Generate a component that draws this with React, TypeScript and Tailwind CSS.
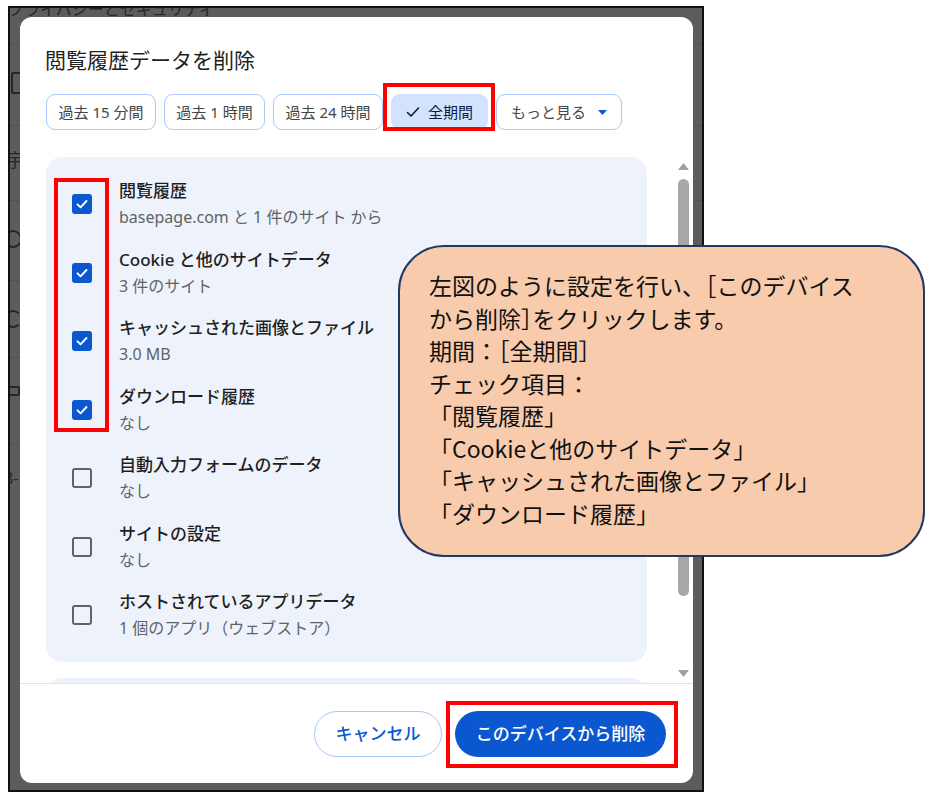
import React from "react";

const ui = "font-['Noto_Sans','Noto_Sans_CJK_JP',sans-serif]";

type Item = { title: string; sub: string; checked: boolean };

const items: Item[] = [
    { title: "閲覧履歴", sub: "basepage.com と 1 件のサイト から", checked: true },
    { title: "Cookie と他のサイトデータ", sub: "3 件のサイト", checked: true },
    { title: "キャッシュされた画像とファイル", sub: "3.0 MB", checked: true },
    { title: "ダウンロード履歴", sub: "なし", checked: true },
    { title: "自動入力フォームのデータ", sub: "なし", checked: false },
    { title: "サイトの設定", sub: "なし", checked: false },
    { title: "ホストされているアプリデータ", sub: "1 個のアプリ（ウェブストア）", checked: false }
];

function Checkbox({ checked }: { checked: boolean }) {
    if (checked) {
        return (
            <div className="w-[20px] h-[20px] rounded-[3px] bg-[#0b57d0] flex items-center justify-center">
                <svg width="14" height="14" viewBox="0 0 14 14" fill="none">
                    <path d="M2.5 7.3l3 3L11.5 4" stroke="white" strokeWidth="1.9" strokeLinecap="round" strokeLinejoin="round" />
                </svg>
            </div>
        );
    }
    return <div className="w-[20px] h-[20px] rounded-[3px] border-2 border-[#5f6368]" />;
}

function Chip({ label, width }: { label: string; width: string }) {
    return (
        <div
            className={`${width} h-[36px] rounded-[9px] border border-[#a8c7fa] flex items-center justify-center text-[15px] text-[#444746]`}
        >
            {label}
        </div>
    );
}

// half-width bracket like the callout's font
function B({ c }: { c: string }) {
    return <span className="[font-feature-settings:'halt']">{c}</span>;
}

function Background() {
    return (
        <div className="absolute inset-0">
            <div className="absolute left-[-2px] top-[-7px] text-[16px] leading-[16px] text-[#262626] whitespace-nowrap">
                プライバシーとセキュリティ
            </div>
            <div className="absolute left-0 top-[35px] w-full h-px bg-[#515151]" />
            <div className="absolute left-0 top-[117px] w-full h-px bg-[#515151]" />
            <div className="absolute left-0 top-[192px] w-full h-px bg-[#515151]" />
            <div className="absolute left-0 top-[272px] w-full h-px bg-[#515151]" />
            <div className="absolute left-0 top-[349px] w-full h-px bg-[#515151]" />
            <div className="absolute left-0 top-[435px] w-full h-px bg-[#515151]" />
            <div className="absolute left-[1px] top-[64px] w-[14px] h-[22px] border-2 border-[#262626] rounded-[2px]" />
            <div className="absolute left-[-4px] top-[143px] text-[18px] leading-[18px] text-[#262626]">宇</div>
            <div className="absolute left-[-6px] top-[222px] w-[18px] h-[18px] rounded-full border-2 border-[#262626]" />
            <div className="absolute left-[-6px] top-[302px] w-[18px] h-[18px] rounded-full border-2 border-[#262626] border-r-transparent" />
            <div className="absolute left-[-4px] top-[378px] w-[14px] h-[10px] border-2 border-[#262626] rounded-[2px]" />
            <div className="absolute left-[-6px] top-[462px] text-[16px] leading-[16px] text-[#262626]">8-</div>
        </div>
    );
}

export default function App() {
    return (
        <div className={`relative w-[943px] h-[798px] bg-white overflow-hidden ${ui}`}>
            <div className="pl-[8px] pt-[6px]">
                <div className="relative w-[696px] h-[786px] border-2 border-[#111] bg-[#5c5c5c] overflow-hidden pl-[10px] pt-[9px]">
                    <Background />
                    <div className="relative w-[673px] h-[766px] rounded-[12px] bg-white flex flex-col overflow-hidden">
                        <div className="pt-[29px] pl-[25px] text-[21px] leading-[28px] text-[#1f1f1f]">
                            閲覧履歴データを削除
                        </div>
                        <div className="mt-[20px] pl-[26px] flex gap-2">
                            <Chip label="過去 15 分間" width="w-[110px]" />
                            <Chip label="過去 1 時間" width="w-[101px]" />
                            <Chip label="過去 24 時間" width="w-[110px]" />
                            <div className="w-[97px] h-[36px] rounded-[9px] bg-[#d3e3fd] flex items-center justify-center gap-[8px] text-[15px] text-[#041e49]">
                                <svg width="14" height="14" viewBox="0 0 14 14" fill="none">
                                    <path d="M1.5 7.5l3.5 3.5L12.5 3" stroke="#041e49" strokeWidth="1.6" strokeLinecap="round" strokeLinejoin="round" />
                                </svg>
                                <span>全期間</span>
                            </div>
                            <div className="w-[126px] h-[36px] rounded-[9px] border border-[#a8c7fa] flex items-center justify-center gap-[12px] text-[15px] text-[#444746]">
                                <span>もっと見る</span>
                                <svg width="9" height="5" viewBox="0 0 9 5">
                                    <path d="M0 0h9L4.5 5z" fill="#0b57d0" />
                                </svg>
                            </div>
                        </div>
                        <div className="mt-[22px] h-[531px] flex">
                            <div className="flex-1 overflow-hidden pl-[26px] pt-[5px]">
                                <div className="w-[601px] rounded-[16px] bg-[#eef3fb] pt-[13px] pb-[12px]">
                                    {items.map((it) => (
                                        <div key={it.title} className="flex items-center py-[8.25px] pl-[26px]">
                                            <Checkbox checked={it.checked} />
                                            <div className="ml-[27px]">
                                                <div className="text-[17px] leading-[26px] font-medium text-[#1f1f1f]">{it.title}</div>
                                                <div className="text-[16px] leading-[26px] text-[#5f6368]">{it.sub}</div>
                                            </div>
                                        </div>
                                    ))}
                                </div>
                                <div className="mt-[16px] w-[601px] h-[100px] rounded-[16px] bg-[#eef3fb]" />
                            </div>
                            <div className="w-[15px] mr-[2px] flex flex-col items-center pt-[11px] pb-[6px]">
                                <svg width="11" height="7" viewBox="0 0 11 7">
                                    <path d="M0 7h11L5.5 0z" fill="#a0a0a0" />
                                </svg>
                                <div className="mt-[9px] w-[11px] h-[417px] rounded-full bg-[#a8a8a8]" />
                                <div className="flex-1" />
                                <svg width="11" height="7" viewBox="0 0 11 7">
                                    <path d="M0 0h11L5.5 7z" fill="#a0a0a0" />
                                </svg>
                            </div>
                        </div>
                        <div className="border-t border-[#e3e3e3] flex justify-end gap-[13px] pt-[27px] pr-[27px]">
                            <div className="w-[128px] h-[46px] rounded-full border border-[#a8c7fa] flex items-center justify-center text-[17px] font-medium text-[#0b57d0]">
                                キャンセル
                            </div>
                            <div className="w-[211px] h-[46px] rounded-full bg-[#0b57d0] flex items-center justify-center text-[17px] font-medium text-white">
                                このデバイスから削除
                            </div>
                        </div>
                    </div>
                </div>
            </div>

            {/* highlight boxes */}
            <div className="absolute left-[383px] top-[83px] w-[112px] h-[48px] border-4 border-[#ff0000]" />
            <div className="absolute left-[54px] top-[178px] w-[55px] h-[254px] border-4 border-[#ff0000]" />
            <div className="absolute left-[446px] top-[701px] w-[232px] h-[67px] border-4 border-[#ff0000]" />

            {/* callout */}
            <div className="absolute left-[398px] top-[245px] w-[527px] h-[312px] rounded-[46px] border-2 border-[#203864] bg-[#f8cbad] pl-[29px] pt-[22px] font-['Noto_Sans_CJK_JP',sans-serif] text-[23px] leading-[32.5px] text-[#111] whitespace-nowrap">
                <div>
                    左図のように設定を行い、<B c="［" />このデバイス
                </div>
                <div>
                    から削除<B c="］" />をクリックします。
                </div>
                <div>
                    期間：<B c="［" />全期間<B c="］" />
                </div>
                <div>チェック項目：</div>
                <div>「閲覧履歴」</div>
                <div>「Cookieと他のサイトデータ」</div>
                <div>「キャッシュされた画像とファイル」</div>
                <div>「ダウンロード履歴」</div>
            </div>
        </div>
    );
}
